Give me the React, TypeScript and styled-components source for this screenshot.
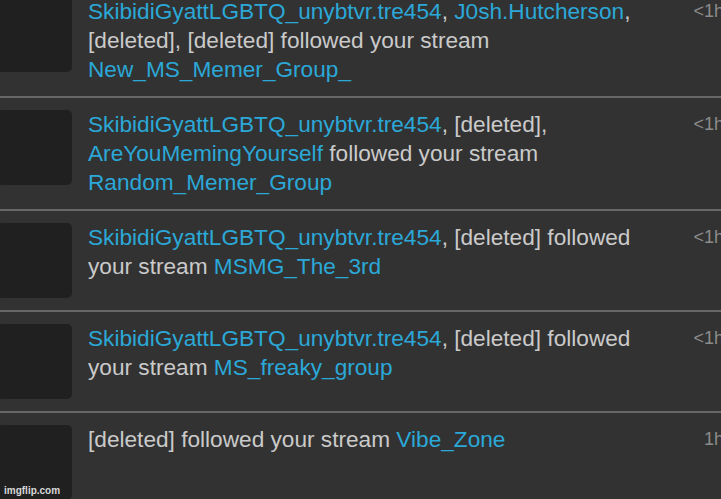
import React from "react";
import styled, { createGlobalStyle } from "styled-components";

const Global = createGlobalStyle`
  html, body {
    margin: 0;
    padding: 0;
    background: #323232;
    overflow: hidden;
    width: 721px;
    height: 499px;
  }
  #root {
    position: relative;
    width: 721px;
    height: 499px;
    overflow: hidden;
  }
`;

const Feed = styled.ul`
  list-style: none;
  margin: -17px 0 0 -3px;
  padding: 0;
  width: 740px;
  font-family: "Liberation Sans", Arial, Helvetica, sans-serif;
`;

const Row = styled.li`
  display: flex;
  align-items: flex-start;
  border-top: 2px solid #676767;
  padding: 12px 0;
`;

const Avatar = styled.div`
  flex: 0 0 75px;
  height: 75px;
  border-radius: 5px;
  background: #202020;
  margin-right: 16px;
`;

const Body = styled.div`
  flex: 0 0 572px;
  font-size: 22.65px;
  line-height: 29px;
  color: #cacaca;
`;

const Link = styled.span`
  color: #2ba8d7;
`;

const Time = styled.div`
  flex: 0 0 60px;
  margin-left: 4px;
  text-align: right;
  font-size: 18px;
  line-height: 29px;
  color: #8b8b8b;
  white-space: nowrap;
`;

const Watermark = styled.div`
  position: absolute;
  left: 4px;
  bottom: 3px;
  font-family: "Liberation Sans", Arial, sans-serif;
  font-size: 10px;
  font-weight: bold;
  color: #d8d8d8;
`;

type Part = { t: string; link?: boolean };

const items: { parts: Part[]; time: string }[] = [
  {
    parts: [
      { t: "SkibidiGyattLGBTQ_unybtvr.tre454", link: true },
      { t: ", " },
      { t: "J0sh.Hutcherson", link: true },
      { t: ", [deleted], [deleted] followed your stream " },
      { t: "New_MS_Memer_Group_", link: true },
    ],
    time: "<1h",
  },
  {
    parts: [
      { t: "SkibidiGyattLGBTQ_unybtvr.tre454", link: true },
      { t: ", [deleted], " },
      { t: "AreYouMemingYourself", link: true },
      { t: " followed your stream " },
      { t: "Random_Memer_Group", link: true },
    ],
    time: "<1h",
  },
  {
    parts: [
      { t: "SkibidiGyattLGBTQ_unybtvr.tre454", link: true },
      { t: ", [deleted] followed your stream " },
      { t: "MSMG_The_3rd", link: true },
    ],
    time: "<1h",
  },
  {
    parts: [
      { t: "SkibidiGyattLGBTQ_unybtvr.tre454", link: true },
      { t: ", [deleted] followed your stream " },
      { t: "MS_freaky_group", link: true },
    ],
    time: "<1h",
  },
  {
    parts: [
      { t: "[deleted] followed your stream " },
      { t: "Vibe_Zone", link: true },
    ],
    time: "1h",
  },
];

export default function App() {
  return (
    <>
      <Global />
      <Feed>
        {items.map((item, i) => (
          <Row key={i}>
            <Avatar />
            <Body>
              {item.parts.map((p, j) =>
                p.link ? <Link key={j}>{p.t}</Link> : <React.Fragment key={j}>{p.t}</React.Fragment>
              )}
            </Body>
            <Time>{item.time}</Time>
          </Row>
        ))}
      </Feed>
      <Watermark>imgflip.com</Watermark>
    </>
  );
}
